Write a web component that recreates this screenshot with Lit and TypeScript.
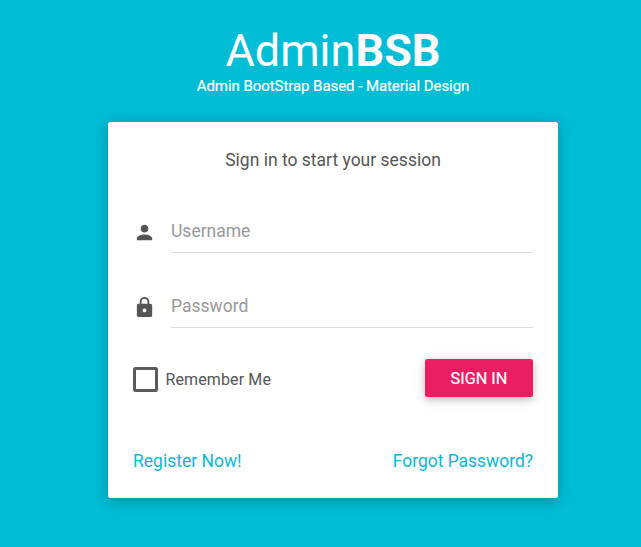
import { LitElement, html, css } from "lit";
import { customElement } from "lit/decorators.js";

@customElement("app-root")
export class AppRoot extends LitElement {
  static styles = css`
    :host {
      display: block;
      box-sizing: border-box;
      height: 547px;
      padding: 25px 83px 0 108px;
      overflow: hidden;
      background: #00bcd4;
      font-family: Roboto, "Liberation Sans", sans-serif;
      color: #555;
    }
    * { box-sizing: border-box; }
    .logo { height: 97px; text-align: center; color: #fff; }
    .brand { display: block; font-size: 45px; line-height: 52px; }
    .tagline { display: block; font-size: 15px; line-height: 18px; letter-spacing: -0.06px; -webkit-text-stroke: 0.2px #fff; }
    .card {
      height: 376px;
      padding: 25px;
      border-radius: 2.5px;
      background: #fff;
      box-shadow: 0 2.5px 12.5px rgba(0, 0, 0, 0.24);
    }
    .msg { height: 70px; padding-top: 1px; font-size: 17.5px; line-height: 25px; text-align: center; }
    .field { display: flex; height: 75px; }
    .field svg { width: 23px; height: 23px; margin-top: 4px; fill: #555; }
    .input {
      flex: 1;
      height: 36px;
      margin-left: 15px;
      padding: 0 0 8px;
      border: 0;
      border-bottom: 1px solid #ddd;
      background: none;
      color: #555;
      font: 17.5px/24px Roboto, "Liberation Sans", sans-serif;
      outline: none;
    }
    .input::placeholder { color: #999; opacity: 1; }
    .actions { display: flex; justify-content: space-between; height: 90px; margin-top: -8px; }
    .remember { display: flex; height: 25px; margin-top: 8px; font-size: 16px; line-height: 25px; letter-spacing: 0.12px; }
    .box { width: 25px; height: 25px; margin-right: 7.5px; border: 3px solid #5a5a5a; border-radius: 2.5px; }
    .submit {
      width: 108px;
      height: 38px;
      padding: 0;
      border: 0;
      border-radius: 2.5px;
      background: #e91e63;
      box-shadow: 0 2.5px 6px rgba(0, 0, 0, 0.16), 0 2.5px 12.5px rgba(0, 0, 0, 0.12);
      color: #fff;
      font: 16.25px Roboto, "Liberation Sans", sans-serif;
      -webkit-text-stroke: 0.2px #fff;
    }
    .links { display: flex; justify-content: space-between; font-size: 17.5px; line-height: 25px; }
    .links a { color: #0bb7d3; text-decoration: none; }
    .links a:last-child { letter-spacing: -0.03px; }
  `;

  render() {
    return html`
      <header class="logo">
        <span class="brand">Admin<b>BSB</b></span>
        <span class="tagline">Admin BootStrap Based - Material Design</span>
      </header>
      <main class="card">
        <div class="msg">Sign in to start your session</div>
        <div class="field">
          <svg viewBox="0 0 24 24"><path d="M12 12c2.21 0 4-1.79 4-4s-1.79-4-4-4-4 1.790-4 4 1.790 4 4 4zm0 2c-2.670 0-8 1.340-8 4v2h16v-2c0-2.660-5.330-4-8-4z" /></svg>
          <input class="input" type="text" placeholder="Username" />
        </div>
        <div class="field">
          <svg viewBox="0 0 24 24"><path d="M18 8h-1V6c0-2.760-2.240-5-5-5S7 3.240 7 6v2H6c-1.100 0-2 .9-2 2v10c0 1.100.9 2 2 2h12c1.100 0 2-.9 2-2V10c0-1.100-.9-2-2-2zm-6 9c-1.100 0-2-.9-2-2s.9-2 2-2 2 .9 2 2-.9 2-2 2zm3.100-9H8.900V6c0-1.710 1.390-3.100 3.100-3.100s3.100 1.390 3.100 3.100v2z" /></svg>
          <input class="input" type="password" placeholder="Password" />
        </div>
        <div class="actions">
          <label class="remember"><span class="box"></span>Remember Me</label>
          <button class="submit">SIGN IN</button>
        </div>
        <nav class="links"><a href="#">Register Now!</a><a href="#">Forgot Password?</a></nav>
      </main>
    `;
  }
}
